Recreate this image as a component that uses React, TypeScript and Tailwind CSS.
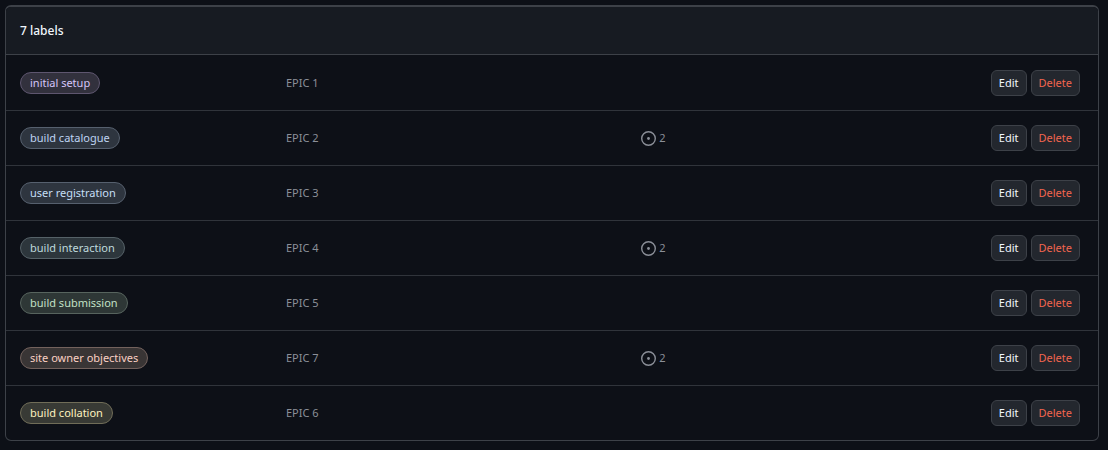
type Label = { name: string; description: string; issues?: number; tone: string };

const labels: Label[] = [
  { name: "initial setup", description: "EPIC 1", tone: "border-[#5e566f] bg-[#32313d] text-[#d4c5f9]" },
  { name: "build catalogue", description: "EPIC 2", issues: 2, tone: "border-[#56606e] bg-[#2e353f] text-[#bfd4f2]" },
  { name: "user registration", description: "EPIC 3", tone: "border-[#56606e] bg-[#2e353f] text-[#c5def5]" },
  { name: "build interaction", description: "EPIC 4", issues: 2, tone: "border-[#566268] bg-[#2d363c] text-[#bfdadc]" },
  { name: "build submission", description: "EPIC 5", tone: "border-[#57645e] bg-[#2e3736] text-[#c2e0c6]" },
  { name: "site owner objectives", description: "EPIC 7", issues: 2, tone: "border-[#73625d] bg-[#393535] text-[#f9d0c4]" },
  { name: "build collation", description: "EPIC 6", tone: "border-[#706d58] bg-[#383a35] text-[#fef2c0]" },
];

function IssueIcon() {
  return (
    <svg aria-hidden="true" viewBox="0 0 16 16" className="size-[15px] fill-[#8b8f98]">
      <path d="M8 9.5a1.5 1.5 0 1 0 0-3 1.5 1.5 0 0 0 0 3Z" />
      <path d="M8 0a8 8 0 1 1 0 16A8 8 0 0 1 8 0ZM1.5 8a6.5 6.5 0 1 0 13 0 6.5 6.5 0 0 0-13 0Z" />
    </svg>
  );
}

const button = "h-[26px] cursor-pointer rounded-md border border-[#3d4148] bg-[#23272e] px-[7px] text-[11px] leading-4 hover:bg-[#30363d]";

function Row({ label }: { label: Label }) {
  return (
    <li className="grid h-[55px] grid-cols-12 items-center border-t border-[#30343b] pr-[18px] pl-3.5 first:border-transparent">
      <div className="col-span-3 flex">
        <a href="#" className={`rounded-full border px-[9px] text-[11px] leading-5 whitespace-nowrap ${label.tone}`}>
          {label.name}
        </a>
      </div>
      <p className="col-span-4 pl-px">{label.description}</p>
      <div className="col-span-2">
        {label.issues && (
          <a href="#" aria-label={`${label.issues} open issues`} className="flex items-center gap-[3px] pl-[3px]">
            <IssueIcon />
            <span>{label.issues}</span>
          </a>
        )}
      </div>
      <div className="col-span-3 flex justify-end gap-1">
        <button type="button" className={`${button} text-[#f0f6fc]`}>Edit</button>
        <button type="button" className={`${button} text-[#f1654f]`}>Delete</button>
      </div>
    </li>
  );
}

export default function App() {
  return (
    <main className="min-h-screen bg-[#0d1017] pt-[5px] pr-[9px] pb-2 pl-[5px] font-['Noto_Sans',sans-serif] text-[11px] leading-4 text-[#8b8f98]">
      <section className="overflow-hidden rounded-md border border-t-2 border-[#3d4148]">
        <header className="border-b border-[#3d4148] bg-[#171b22] px-3.5 py-3.5">
          <h1 className="text-xs leading-[19px] font-medium text-[#f0f6fc]">{labels.length} labels</h1>
        </header>
        <ul>
          {labels.map((label) => (
            <Row key={label.name} label={label} />
          ))}
        </ul>
      </section>
    </main>
  );
}
